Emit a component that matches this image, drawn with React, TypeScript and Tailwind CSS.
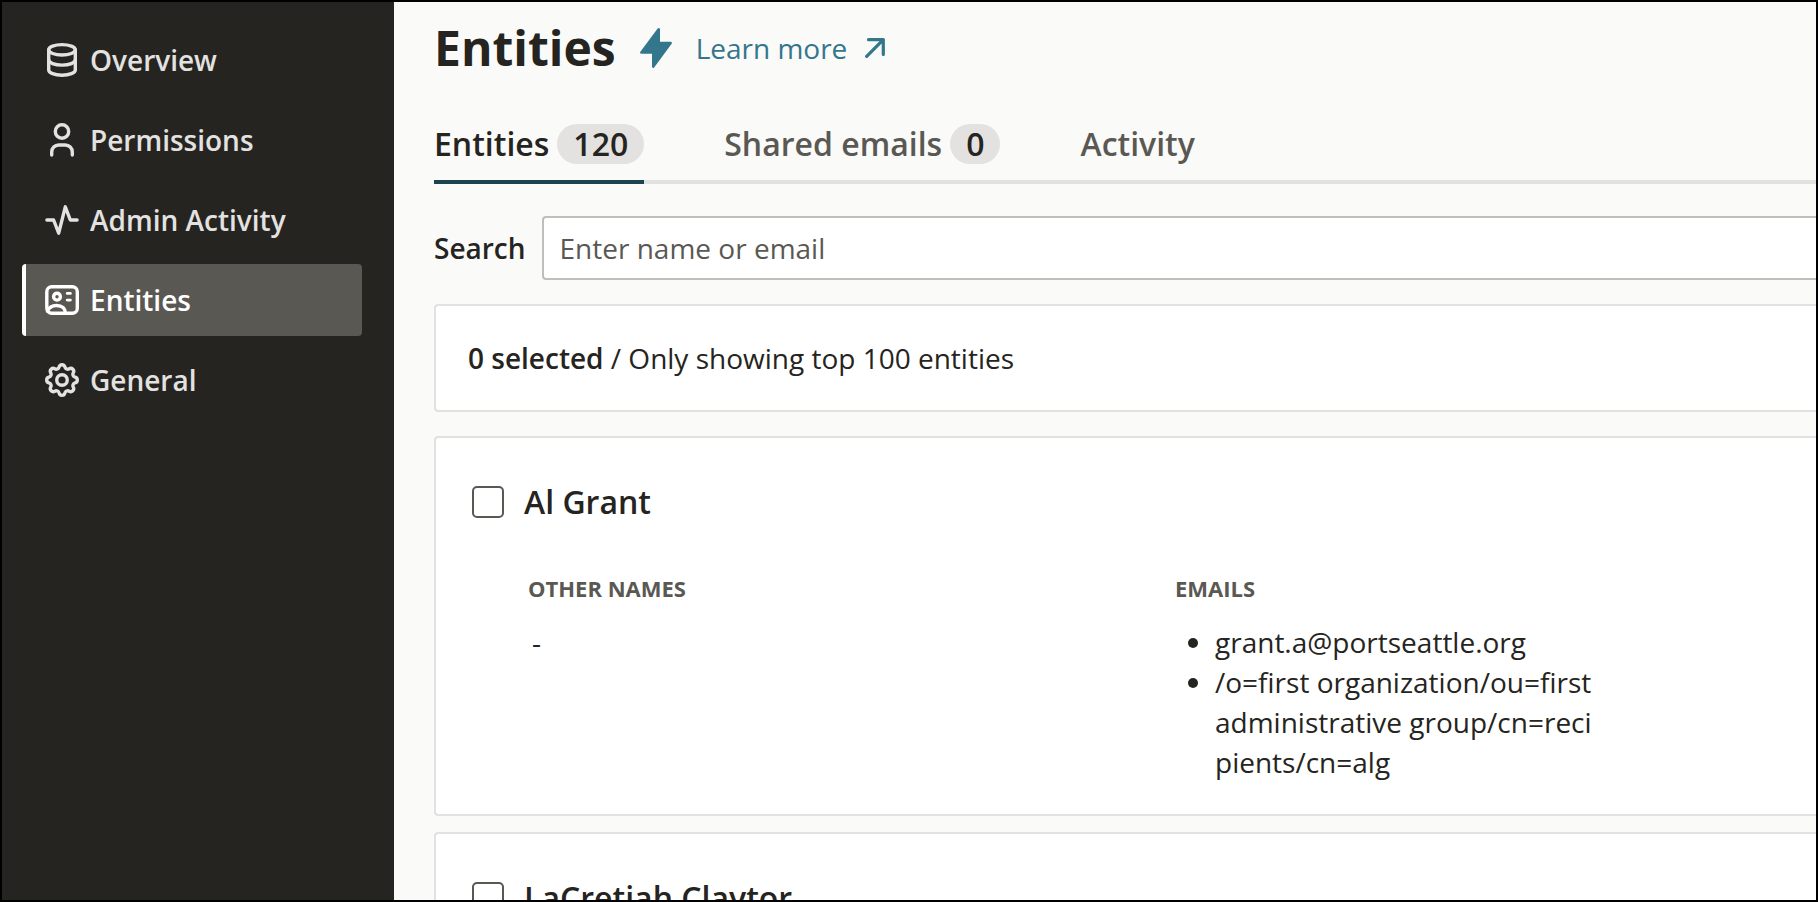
import clsx from 'clsx'
import { ReactNode } from 'react'

interface NavItem {
  label: string
  icon: ReactNode
  active?: boolean
}

interface Tab {
  label: string
  count?: number
  active?: boolean
}

interface Entity {
  name: string
  otherNames: string[]
  emails: string[]
}

const NavIcon = ({ children }: { children: ReactNode }) => (
  <svg
    className="size-10 shrink-0"
    viewBox="0 0 40 40"
    fill="none"
    stroke="currentColor"
    strokeWidth={3.4}
    strokeLinecap="round"
    strokeLinejoin="round"
  >
    {children}
  </svg>
)

const NAV_ITEMS: NavItem[] = [
  {
    label: 'Overview',
    icon: (
      <NavIcon>
        <ellipse cx="20" cy="9.8" rx="13.3" ry="5.2" />
        <path d="M6.7 9.8v20.1c0 3 6 5.3 13.3 5.3s13.3-2.3 13.3-5.3V9.8" />
        <path d="M6.7 19.8c0 3 6 5.3 13.3 5.3s13.3-2.3 13.3-5.3" />
      </NavIcon>
    ),
  },
  {
    label: 'Permissions',
    icon: (
      <NavIcon>
        <circle cx="20" cy="11.5" r="6.7" />
        <path d="M9.7 35v-2.8c0-4.1 3-7.2 7.1-7.2h6.4c4.1 0 7.1 3.1 7.1 7.2V35" />
      </NavIcon>
    ),
  },
  {
    label: 'Admin Activity',
    icon: (
      <NavIcon>
        <path d="M4.9 20h6.7l5.1 13.2 6.6-26.4L28.3 20h6.8" />
      </NavIcon>
    ),
  },
  {
    label: 'Entities',
    active: true,
    icon: (
      <NavIcon>
        <rect x="4.8" y="6.7" width="30.5" height="26.6" rx="5" />
        <circle cx="15" cy="16.7" r="3.4" />
        <path d="M25.2 13.4h3.2M25.2 20.1h3.2" strokeWidth={2.8} />
        <path d="M5.6 31.3c1.3-3.8 4.4-5.8 9-5.8 5.6 0 8.8 3.1 8.8 7.7" />
      </NavIcon>
    ),
  },
  {
    label: 'General',
    icon: (
      <NavIcon>
        <g transform="translate(-0.4 -0.4) scale(1.7)" strokeWidth={2}>
          <path d="M10.325 4.317c.426 -1.756 2.924 -1.756 3.35 0a1.724 1.724 0 0 0 2.573 1.066c1.543 -.94 3.31 .826 2.37 2.37a1.724 1.724 0 0 0 1.065 2.572c1.756 .426 1.756 2.924 0 3.35a1.724 1.724 0 0 0 -1.066 2.573c.94 1.543 -.826 3.31 -2.37 2.37a1.724 1.724 0 0 0 -2.572 1.065c-.426 1.756 -2.924 1.756 -3.35 0a1.724 1.724 0 0 0 -2.573 -1.066c-1.543 .94 -3.31 -.826 -2.37 -2.37a1.724 1.724 0 0 0 -1.065 -2.572c-1.756 -.426 -1.756 -2.924 0 -3.35a1.724 1.724 0 0 0 1.066 -2.573c-.94 -1.543 .826 -3.31 2.37 -2.37c1 .608 2.296 .07 2.572 -1.065z" />
          <circle cx="12" cy="12" r="3.1" />
        </g>
      </NavIcon>
    ),
  },
]

const TABS: Tab[] = [
  { label: 'Entities', count: 120, active: true },
  { label: 'Shared emails', count: 0 },
  { label: 'Activity' },
]

const ENTITIES: Entity[] = [
  {
    name: 'Al Grant',
    otherNames: [],
    emails: [
      'grant.a@portseattle.org',
      '/o=first organization/ou=first administrative group/cn=recipients/cn=alg',
    ],
  },
  { name: 'LaCretiah Claytor', otherNames: [], emails: [] },
]

const Sidebar = () => (
  <nav className="flex w-[392px] shrink-0 flex-col gap-2 bg-[#252420] pt-[22px] pr-8 pl-5">
    {NAV_ITEMS.map(({ label, icon, active }) => (
      <a
        key={label}
        className={clsx(
          'flex h-[72px] shrink-0 items-center gap-2 rounded-sm border-l-4 pl-4 font-semibold',
          active
            ? 'border-white bg-[#5a5853] text-white'
            : 'border-transparent text-[#e3e2e0]',
        )}
      >
        {icon}
        {label}
      </a>
    ))}
  </nav>
)

const PageHeader = () => (
  <header className="flex h-[60px] shrink-0 items-center pl-10">
    <h1 className="text-5xl leading-[60px] font-bold">Entities</h1>
    <svg
      className="ml-6 h-10 w-8 text-[#34768c]"
      viewBox="0 0 32 40"
      fill="currentColor"
      stroke="currentColor"
      strokeWidth={2.6}
      strokeLinejoin="round"
    >
      <path d="M18.7 1.4V15h11.9L13.3 38.6V24.5H1.4z" />
    </svg>
    <a className="ml-6 flex items-center gap-[18px] text-[#34768c]">
      Learn more
      <svg
        className="size-5"
        viewBox="0 0 20 20"
        fill="none"
        stroke="currentColor"
        strokeWidth={3.2}
        strokeLinecap="round"
        strokeLinejoin="round"
      >
        <path d="M3.5 1.7h14.8v14.8M18.3 1.7 1.7 18.3" />
      </svg>
    </a>
  </header>
)

const Tabs = () => (
  <div className="mt-[46px] ml-10 flex h-[60px] shrink-0 gap-20 text-[32px] leading-10 font-semibold shadow-[inset_0_-4px_0_#e2e1df]">
    {TABS.map(({ label, count, active }) => (
      <div
        key={label}
        className={clsx(
          'flex items-start gap-2 border-b-4',
          active ? 'border-[#1c4350]' : 'border-transparent text-[#5a5853]',
        )}
      >
        {label}
        {count !== undefined && (
          <span className="rounded-full bg-[#e3e2e0] px-4 text-[#252420]">
            {count}
          </span>
        )}
      </div>
    ))}
  </div>
)

const EntityCard = ({ name, otherNames, emails }: Entity) => (
  <article className="h-[380px] shrink-0 rounded-l-sm border-2 border-r-0 border-[#e2e1df] bg-white py-8 pl-9">
    <div className="flex h-16 items-center gap-5">
      <span className="size-8 rounded-[5px] border-2 border-[#5a5853]" />
      <h2 className="text-[32px] leading-10 font-semibold">{name}</h2>
    </div>
    {emails.length > 0 && (
      <div className="mt-9 flex pl-14">
        <section className="w-[647px]">
          <h3 className="text-[22px] leading-[36px] font-bold text-[#5a5853]">
            OTHER NAMES
          </h3>
          <p className="mt-4 pl-1">{otherNames.join(', ') || '-'}</p>
        </section>
        <section className="w-[420px]">
          <h3 className="text-[22px] leading-[36px] font-bold text-[#5a5853]">
            EMAILS
          </h3>
          <ul className="mt-4 list-disc pl-10 break-all">
            {emails.map((email) => (
              <li key={email}>{email}</li>
            ))}
          </ul>
        </section>
      </div>
    )}
  </article>
)

export default function App() {
  return (
    <div className="flex h-[902px] w-[1818px] overflow-hidden border-2 border-black bg-[#fafaf8] font-['Open_Sans',sans-serif] text-[28px] leading-10 text-[#252420]">
      <Sidebar />
      <main className="flex min-w-0 flex-1 flex-col pt-4">
        <PageHeader />
        <Tabs />
        <label className="mt-8 ml-10 flex h-16 shrink-0 items-center gap-4 font-semibold">
          Search
          <input
            className="h-16 flex-1 rounded-l-sm border-2 border-r-0 border-[#bfbebb] bg-white px-4 font-normal placeholder:text-[#5a5853]"
            placeholder="Enter name or email"
          />
        </label>
        <div className="mt-6 ml-10 flex h-[108px] shrink-0 items-center rounded-l-sm border-2 border-r-0 border-[#e2e1df] bg-white pl-8">
          <p>
            <strong className="font-semibold">0 selected</strong> / Only showing
            top 100 entities
          </p>
        </div>
        <div className="mt-6 ml-10 flex flex-col gap-4">
          {ENTITIES.map((entity) => (
            <EntityCard key={entity.name} {...entity} />
          ))}
        </div>
      </main>
    </div>
  )
}
